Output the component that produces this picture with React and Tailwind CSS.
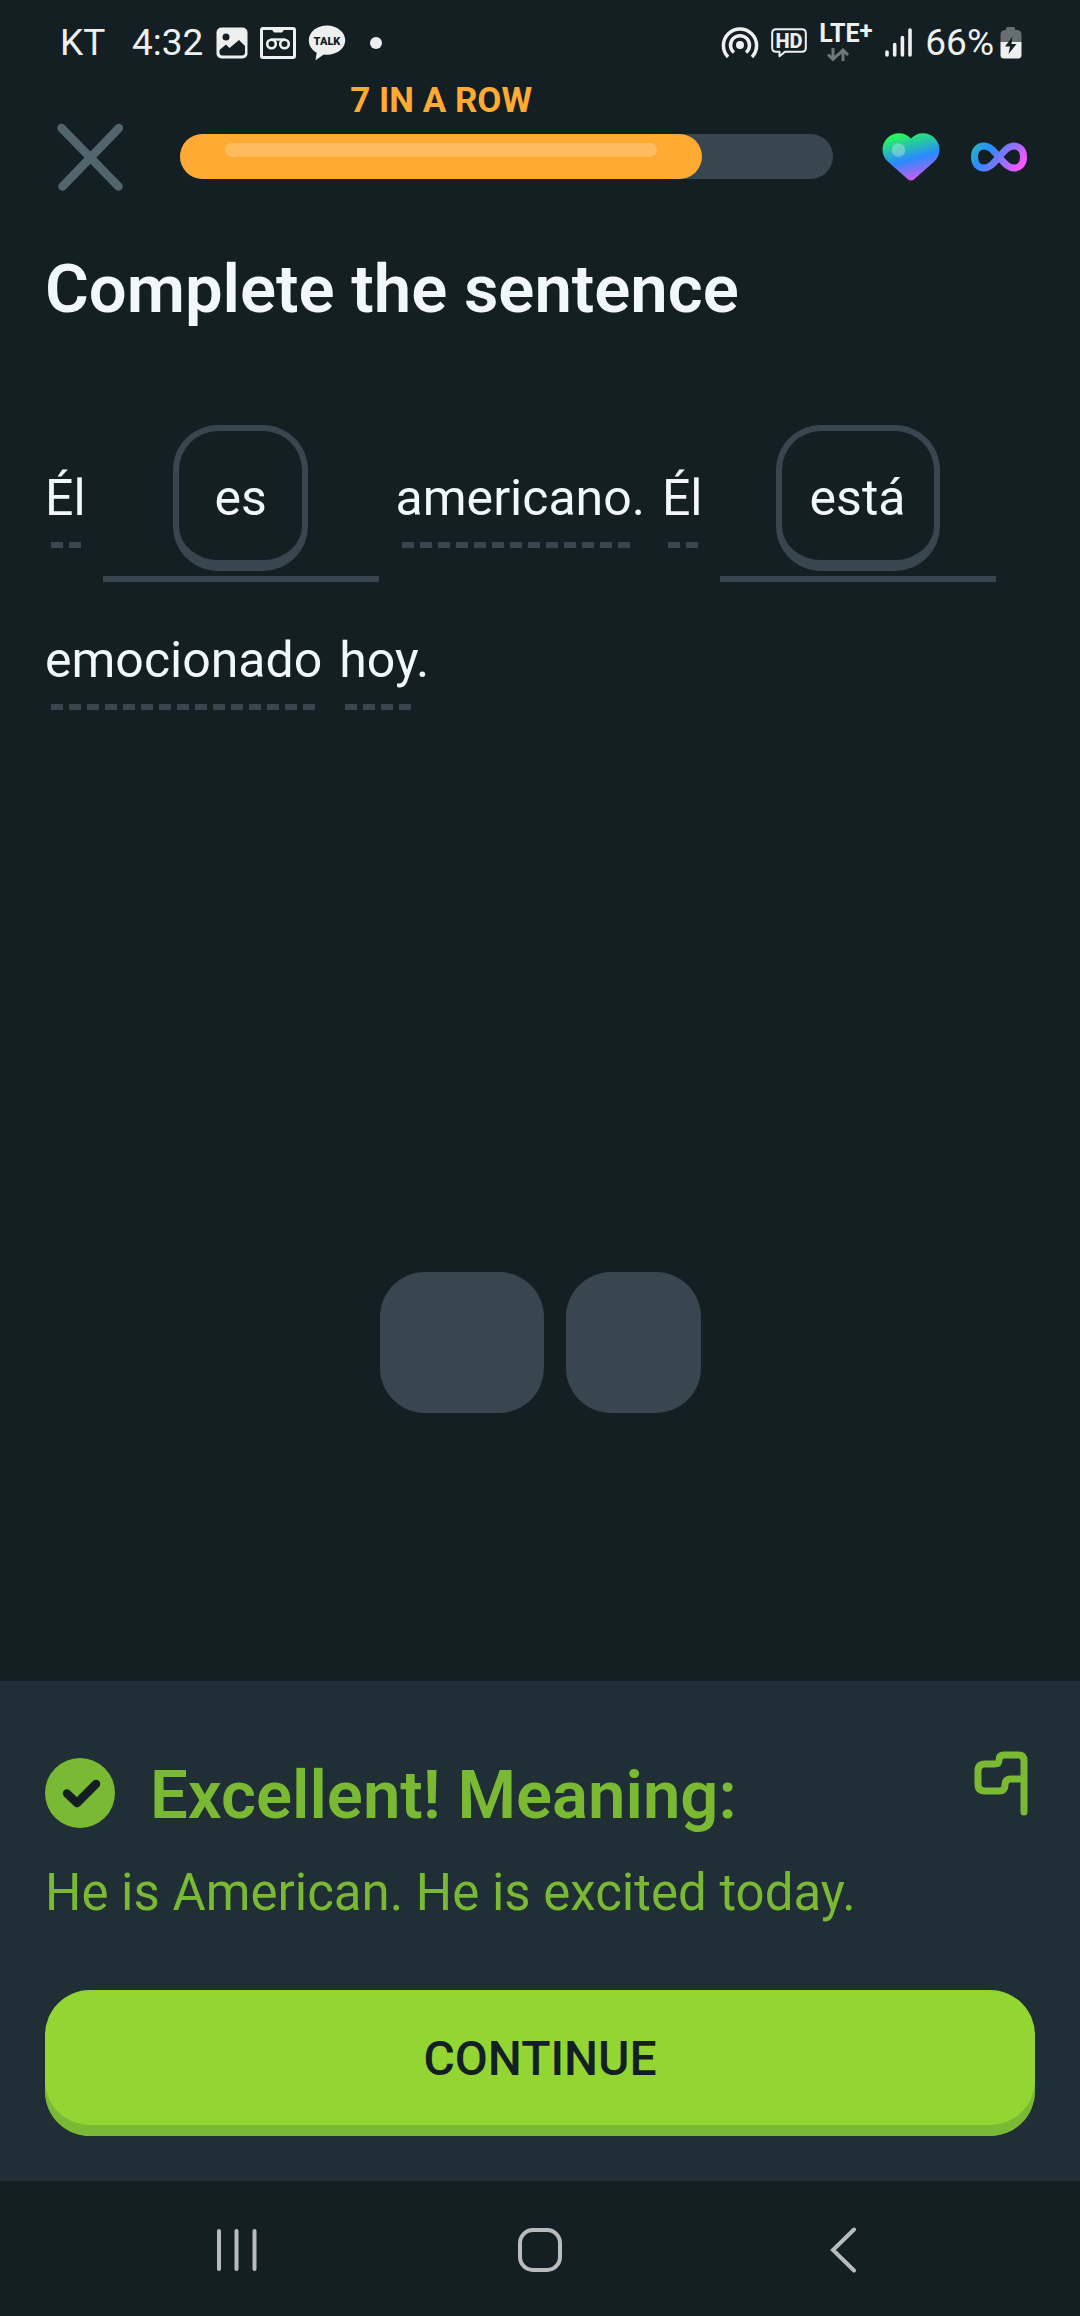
import { useState } from 'react';

const ImageIcon = () => (
  <svg width="32" height="32" viewBox="0 0 32 32">
    <rect x="0.5" y="0.5" width="31" height="31" rx="5" fill="#eef0f0" />
    <circle cx="10" cy="10" r="3.5" fill="#141f23" />
    <path d="M3.5 25.5V23l6.500-5.500 3.500 3.500 9.500-8 6 6v6.500q0 3-3 3H6.500q-3 0-3-3z" fill="#141f23" />
  </svg>
);

const RecorderIcon = () => (
  <svg width="36" height="32" viewBox="0 0 36 32" fill="none" stroke="#eef0f0">
    <rect x="1.500" y="1.500" width="33" height="29" rx="1.500" strokeWidth="3" />
    <path d="M11 1.500h14l-3 4h-8z" fill="#eef0f0" stroke="none" />
    <circle cx="11.500" cy="17" r="4.300" strokeWidth="2.600" />
    <circle cx="24.500" cy="17" r="4.300" strokeWidth="2.600" />
    <path d="M11 12.500h14" strokeWidth="2.400" />
  </svg>
);

const TalkIcon = () => (
  <svg width="38" height="36" viewBox="0 0 38 36">
    <path d="M19 0.500C8.800 0.500 0.800 7 0.800 15.300c0 5.500 3.200 9.900 7.900 12.500L7.500 35.300l8.300-5.700c1 .2 2.100.2 3.200.2 10.200 0 18.200-6.500 18.200-14.500S29.200.5 19 .5z" fill="#eef0f0" />
    <text x="19" y="19.500" textAnchor="middle" fontSize="11" fontWeight="900" fill="#141f23">TALK</text>
  </svg>
);

const HotspotIcon = () => (
  <svg width="38" height="34" viewBox="0 0 38 34" fill="none" stroke="#eef0f0" strokeWidth="3.500">
    <circle cx="19" cy="19" r="4" fill="#eef0f0" stroke="none" />
    <path d="M13 26.500a9.500 9.500 0 1 1 12 0" />
    <path d="M7 31a16.600 16.600 0 1 1 24 0" />
  </svg>
);

const HdIcon = () => (
  <svg width="36" height="30" viewBox="0 0 36 30">
    <path d="M5 1.200h26q3.800 0 3.800 3.800v15q0 3.800-3.800 3.800H14l-5.500 4.500v-4.500H5q-3.800 0-3.800-3.800V5q0-3.800 3.800-3.800z" fill="none" stroke="#eef0f0" strokeWidth="2" strokeLinejoin="round" />
    <text x="18" y="19.500" textAnchor="middle" fontSize="20" fontWeight="800" fill="#eef0f0">HD</text>
  </svg>
);

const DataArrows = () => (
  <svg width="22" height="14" viewBox="0 0 22 14" fill="none" stroke="#70777a" strokeWidth="3">
    <path d="M6 0v11M1 6.500l5 5 5-5M16 13V2M11 7l5-5 5 5" />
  </svg>
);

const SignalIcon = () => (
  <svg width="28" height="30" viewBox="0 0 28 30" stroke="#eef0f0" strokeWidth="3.600" strokeLinecap="round">
    <path d="M2 24v3M9.700 16.500V27M17.400 9.500V27M25 2v25" />
  </svg>
);

const BatteryIcon = () => (
  <svg width="22" height="34" viewBox="0 0 22 34">
    <path d="M6 4V2.500Q6 1 7.500 1h6Q15 1 15 2.500V4h2.500Q21.500 4.500 21.500 8.500V16h-21V8.500Q.5 4.500 4.500 4z" fill="#666e71" />
    <path d="M.5 16h21v13q0 3.500-3.500 3.500H4Q.5 32.500.5 29z" fill="#eef0f0" />
    <path d="M12.500 10.500L5 20.500h5l-1.500 7.500 8-10h-5z" fill="#141f23" />
  </svg>
);

const HeartIcon = () => (
  <svg width="58" height="48" viewBox="0 0 58 48">
    <defs>
      <linearGradient id="heart" gradientUnits="userSpaceOnUse" x1="16" y1="2" x2="28" y2="49">
        <stop offset="0" stopColor="#26f75c" />
        <stop offset="0.550" stopColor="#288aff" />
        <stop offset="1" stopColor="#d55aee" />
      </linearGradient>
    </defs>
    <path d="M29 5.500C25.500 2 21.500.2 17 .2 8 .2.500 7.500.500 16.500c0 5 2 9 5.500 12.200L25.500 46q3.500 3 7 0L52 28.700c3.500-3.200 5.500-7.200 5.500-12.200C57.500 7.500 50 .2 41 .2 36.500.2 32.500 2 29 5.500z" fill="url(#heart)" />
    <circle cx="16.500" cy="17" r="6.800" fill="#fff" fillOpacity="0.300" />
  </svg>
);

const InfinityIcon = () => (
  <svg width="58" height="30" viewBox="0 0 58 30">
    <defs>
      <linearGradient id="infinity" gradientUnits="userSpaceOnUse" x1="5" y1="0" x2="48" y2="30">
        <stop offset="0" stopColor="#2bb3bd" />
        <stop offset="0.300" stopColor="#2a8cff" />
        <stop offset="1" stopColor="#fc55ff" />
      </linearGradient>
    </defs>
    <path d="M29 15C23 8 19.500 4 14 4S4.500 8 4.500 15 8.500 26 14 26s9-4 15-11S38.500 4 44 4s9.500 4 9.500 11S49.500 26 44 26s-9-4-15-11z" fill="none" stroke="url(#infinity)" strokeWidth="7" />
  </svg>
);

const StatusBar = () => (
  <div className="flex h-[86px] items-center justify-between pl-[60px] pr-[58px] text-[37px] leading-[44px] text-[#eef0f0]">
    <div className="flex items-center">
      <span className="w-[72px]">KT</span>
      <span className="w-[84px]">4:32</span>
      <div className="flex items-center gap-3">
        <ImageIcon />
        <RecorderIcon />
        <TalkIcon />
      </div>
      <span className="ml-6 size-3 rounded-full bg-[#eef0f0]" />
    </div>
    <div className="flex items-center gap-3">
      <HotspotIcon />
      <HdIcon />
      <div className="flex w-[54px] flex-col gap-1">
        <div className="flex text-[25px] font-bold leading-[20px]">
          LTE<sup className="top-0 text-[24px] leading-[14px]">+</sup>
        </div>
        <div className="pl-2"><DataArrows /></div>
      </div>
      <SignalIcon />
      <div className="flex items-center gap-[6px]">
        <span>66%</span>
        <BatteryIcon />
      </div>
    </div>
  </div>
);

const Word = ({ children, after, dash }) => (
  <span className="flex h-[157px] flex-col justify-end gap-[14px] pb-[34px]">
    <span className="leading-[60px]">{children}{after}</span>
    <span className={`ml-[6px] h-[6px] bg-[repeating-linear-gradient(90deg,#38464f_0_12px,transparent_12px_18px)] ${dash}`} />
  </span>
);

const Blank = ({ children, width }) => (
  <span className="flex h-[157px] w-[276px] flex-col items-center border-b-[6px] border-[#38464f]">
    <button className={`h-[146px] rounded-[45px] border-[6px] border-b-[11px] border-[#38464f] pt-1 leading-[60px] ${width}`}>
      {children}
    </button>
  </span>
);

export default function App() {
  const [progress] = useState(80);

  return (
    <div className="flex min-h-screen flex-col bg-[#141f23] font-['Roboto',sans-serif] text-[#f1f7fb]">
      <StatusBar />

      <header className="flex items-end pl-[57px] pr-[52px]">
        <button aria-label="Close" className="-mb-3">
          <svg width="66" height="68" viewBox="0 0 66 68" stroke="#52656d" strokeWidth="8.500" strokeLinecap="round">
            <path d="M4.500 5l57 58.500M62 5L5.500 63.500" />
          </svg>
        </button>
        <div className="ml-[57px] flex-1">
          <div className="w-4/5 text-center text-[35px] font-bold leading-[30px] text-[#ffab33]">7 IN A ROW</div>
          <div className="mt-[18px] h-[45px] rounded-full bg-[#38464f]">
            <div className="h-full rounded-full bg-[#ffab33] px-[45px] pt-[9px]" style={{ width: `${progress}%` }}>
              <div className="h-[14px] rounded-full bg-[#ffbc5c]" />
            </div>
          </div>
        </div>
        <div className="-mb-[2px] ml-[49px] flex h-[48px] items-center gap-[30px]">
          <HeartIcon />
          <InfinityIcon />
        </div>
      </header>

      <main className="flex flex-1 flex-col px-[45px]">
        <h1 className="mt-[70px] text-[67px] font-semibold leading-[80px]">Complete the sentence</h1>

        <div className="mt-[96px] flex flex-wrap gap-x-[17px] gap-y-[5px] text-[50px]">
          <Word dash="w-[30px]">Él</Word>
          <Blank width="w-[135px]">es</Blank>
          <Word dash="w-[228px]" after=".">americano</Word>
          <Word dash="w-[30px]">Él</Word>
          <Blank width="w-[164px]">está</Blank>
          <Word dash="w-[264px]">emocionado</Word>
          <Word dash="w-[66px]" after=".">hoy</Word>
        </div>

        <div className="mb-[268px] mt-auto flex justify-center gap-[22px]">
          <div className="h-[141px] w-[164px] rounded-[45px] bg-[#38464f]" />
          <div className="h-[141px] w-[135px] rounded-[45px] bg-[#38464f]" />
        </div>
      </main>

      <section className="bg-[#202f36] px-[45px] pb-[45px] pt-[70px] text-[#79b933]">
        <div className="flex items-start">
          <svg className="mt-[7px]" width="70" height="70" viewBox="0 0 70 70">
            <circle cx="35" cy="35" r="35" fill="#79b933" />
            <path d="M22 35.500l10 9.500 19-19" fill="none" stroke="#141f23" strokeWidth="8.500" strokeLinecap="round" strokeLinejoin="round" />
          </svg>
          <h2 className="ml-[35px] mt-1 flex-1 text-[67px] font-semibold leading-[80px]">Excellent! Meaning:</h2>
          <button aria-label="Report" className="mr-[7px]">
            <svg width="54" height="65" viewBox="0 0 54 65" fill="none" stroke="#79b933" strokeWidth="7" strokeLinecap="round" strokeLinejoin="round">
              <path d="M50 61V9.500Q50 4 44.500 4H30q-5 0-5 5 0 4-4.500 4H11q-7 0-7 7v13q0 7 7 7h14q6 0 6-6t6-6h12" />
            </svg>
          </button>
        </div>
        <p className="mt-7 text-[51px] leading-[60px]">He is American. He is excited today.</p>
        <button className="mt-[67px] h-[146px] w-full rounded-[45px] bg-[#93d634] pb-2 text-[48px] font-medium leading-[60px] text-[#141f23] shadow-[inset_0_-11px_0_#79b933]">
          CONTINUE
        </button>
      </section>

      <nav className="flex h-[135px] items-center justify-between px-[214px] pt-[2px] text-[#b9bcbd]">
        <button aria-label="Recent apps">
          <svg width="44" height="44" viewBox="0 0 44 44" stroke="currentColor" strokeWidth="4" strokeLinecap="round">
            <path d="M5 3v38M22.500 3v38M40.500 3v38" />
          </svg>
        </button>
        <button aria-label="Home">
          <svg width="44" height="44" viewBox="0 0 44 44" fill="none" stroke="currentColor" strokeWidth="4">
            <rect x="2" y="2" width="40" height="40" rx="13" />
          </svg>
        </button>
        <button aria-label="Back" className="flex w-11 justify-center">
          <svg width="28" height="46" viewBox="0 0 28 46" fill="none" stroke="currentColor" strokeWidth="4" strokeLinecap="round">
            <path d="M24 2.500L3 23l21 20.500" />
          </svg>
        </button>
      </nav>
    </div>
  );
}
